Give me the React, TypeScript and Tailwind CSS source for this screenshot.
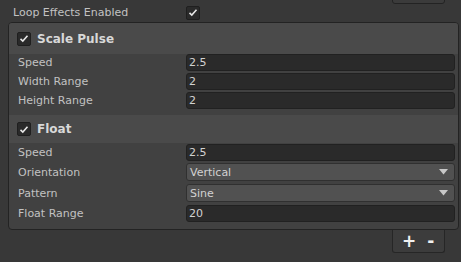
import React from "react";

const Check = () => (
  <div className="w-[14px] h-[14px] rounded-[2px] bg-[#2a2a2a] border border-[#1f1f1f] flex items-center justify-center shrink-0">
    <svg width="10" height="9" viewBox="0 0 10 9">
      <path d="M1.5 4.8 L3.8 7 L8.5 1.8" stroke="#e6e6e6" strokeWidth="1.6" fill="none" />
    </svg>
  </div>
);

const Field = ({ label, value, mt = "mt-[2px]" }: { label: string; value: string; mt?: string }) => (
  <div className={`flex items-center h-[17px] ${mt}`}>
    <div className="w-[177px] pl-[9px] text-[#c2c2c2]">{label}</div>
    <div className="w-[269px] h-[17px] rounded-[3px] bg-[#2a2a2a] border border-[#212121] flex items-center pl-[2px] text-[#d2d2d2]">
      {value}
    </div>
  </div>
);

const Drop = ({ label, value, mt = "mt-[3px]" }: { label: string; value: string; mt?: string }) => (
  <div className={`flex items-center h-[18px] ${mt}`}>
    <div className="w-[177px] pl-[9px] text-[#c2c2c2]">{label}</div>
    <div className="w-[269px] h-[18px] rounded-[3px] bg-[#515151] border border-[#303030] flex items-center justify-between pl-[3px] pr-[6px] text-[#d2d2d2]">
      <span>{value}</span>
      <svg width="9" height="6" viewBox="0 0 9 6">
        <path d="M0 0 L9 0 L4.5 5.5 Z" fill="#c8c8c8" />
      </svg>
    </div>
  </div>
);

export default function App() {
  return (
    <div
      className="w-[461px] h-[262px] bg-[#383838] overflow-hidden text-[11px] leading-none"
      style={{ fontFamily: '"DejaVu Sans", Verdana, sans-serif' }}
    >
      <div className="flex justify-end pr-[16px] h-0">
        <div className="w-[53px] h-[14px] -mt-[10px] bg-[#3b3b3b] border border-[#232323] rounded-b-[3px]" />
      </div>
      <div className="flex items-center h-[19px] mt-[3px] pl-[13px]">
        <div className="w-[173px] text-[#c2c2c2]">Loop Effects Enabled</div>
        <Check />
      </div>
      <div className="ml-[8px] w-[451px] h-[208px] border border-[#232323] rounded-[4px] bg-[#414141] overflow-hidden">
        <div className="h-[31px] bg-[#4a4a4a] flex items-center pl-[8px] gap-[6px]">
          <Check />
          <span className="font-bold text-[12px] text-[#d8d8d8]">Scale Pulse</span>
        </div>
        <Field label="Speed" value="2.5" mt="mt-0" />
        <Field label="Width Range" value="2" />
        <Field label="Height Range" value="2" />
        <div className="h-[28px] mt-[6px] bg-[#4a4a4a] flex items-center pl-[8px] gap-[6px]">
          <Check />
          <span className="font-bold text-[12px] text-[#d8d8d8]">Float</span>
        </div>
        <Field label="Speed" value="2.5" mt="mt-[1px]" />
        <Drop label="Orientation" value="Vertical" mt="mt-[2px]" />
        <Drop label="Pattern" value="Sine" />
        <Field label="Float Range" value="20" mt="mt-[3px]" />
      </div>
      <div className="flex justify-end pr-[16px]">
        <div className="w-[53px] h-[23px] bg-[#3c3c3c] border border-[#262626] border-t-0 rounded-b-[3px] flex items-center pl-[9px] gap-[11px] text-[#f0f0f0] font-bold text-[17px]">
          <span>+</span>
          <span>-</span>
        </div>
      </div>
    </div>
  );
}
